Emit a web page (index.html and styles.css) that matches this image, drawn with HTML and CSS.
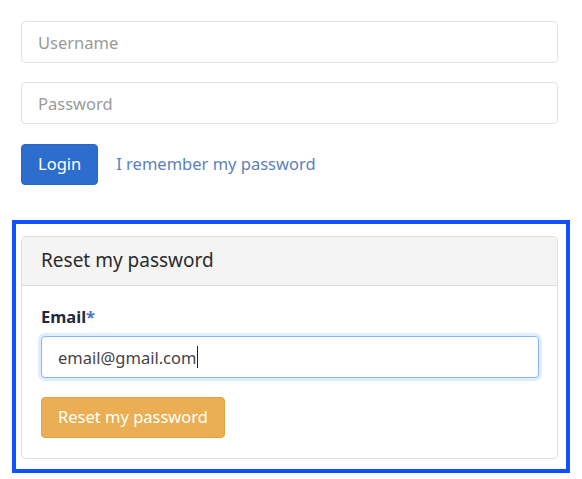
FILE: index.html
```html
<!DOCTYPE html>
<html lang="en">
<head>
<meta charset="UTF-8" />
<meta name="viewport" content="width=device-width, initial-scale=1" />
<title>Login</title>
<link rel="stylesheet" href="styles.css">
</head>
<body>

<form class="login-form">
  <input class="field" type="text" placeholder="Username" />
  <input class="field" type="password" placeholder="Password" />
  <div class="login-row">
    <button type="button" class="btn btn-primary">Login</button>
    <a href="#" class="link">I remember my password</a>
  </div>
</form>

<div class="highlight">
  <div class="card">
    <div class="card-header">Reset my password</div>
    <div class="card-body">
      <label class="label" for="email">Email<span class="req">*</span></label>
      <div class="field field-focus" id="email">email@gmail.com<span class="caret"></span></div>
      <button type="button" class="btn btn-warning">Reset my password</button>
    </div>
  </div>
</div>

</body>
</html>
```

FILE: styles.css
```css
  body {
    margin: 0;
    padding: 21px 24px 0 21px;
    background-color: white;
    font-family: "Noto Sans", Arial, sans-serif;
    font-size: 16.5px;
    color: #333;
  }
  .login-form {
    display: flex;
    flex-direction: column;
    gap: 19px;
    width: 537px;
  }
  .field {
    box-sizing: border-box;
    height: 42px;
    width: 100%;
    border: 1px solid #e3e3e3;
    border-radius: 4px;
    padding: 0 16px;
    font-family: inherit;
    font-size: 16.5px;
    color: #555;
    background: white;
    display: flex;
    align-items: center;
  }
  .field::placeholder {
    color: #9a9a9a;
  }
  .login-row {
    display: flex;
    align-items: center;
    gap: 18px;
    margin-top: 1px;
  }
  .btn {
    box-sizing: border-box;
    height: 41px;
    border-radius: 4px;
    padding: 0 16px 2px;
    font-family: inherit;
    font-size: 16.5px;
    cursor: pointer;
  }
  .btn-primary {
    background-color: #2d6dcd;
    border: 1px solid #2a67c4;
    color: white;
  }
  .link {
    color: #5b7fbd;
    text-decoration: none;
    margin-top: -3px;
  }
  .highlight {
    margin: 35px 0 0 -9px;
    width: 537px;
    border: 4px solid #0f50ff;
    padding: 12px 8px 10px 5px;
  }
  .card {
    border: 1px solid #e0e0e0;
    border-radius: 4px;
    overflow: hidden;
  }
  .card-header {
    background-color: #f4f4f4;
    border-bottom: 1px solid #dcdcdc;
    padding: 0 19px 2px;
    box-sizing: border-box;
    height: 49px;
    display: flex;
    align-items: center;
    font-size: 19px;
    color: #2b2b2b;
  }
  .card-body {
    padding: 20px 18px 20px 19px;
    display: flex;
    flex-direction: column;
    align-items: flex-start;
  }
  .label {
    font-weight: bold;
    color: #1c2b3e;
    margin-bottom: 8px;
    margin-top: -1px;
  }
  .req {
    color: #4a6fd0;
  }
  .field-focus {
    height: 42px;
    border-color: #86b6f2;
    box-shadow: 0 0 0 3px rgba(134, 182, 242, 0.25);
    color: #444;
  }
  .caret {
    display: inline-block;
    width: 1px;
    height: 22px;
    background: #222;
    margin-left: 1px;
  }
  .btn-warning {
    margin-top: 19px;
    background-color: #ebae52;
    border: 1px solid #e0a345;
    color: white;
  }
```
